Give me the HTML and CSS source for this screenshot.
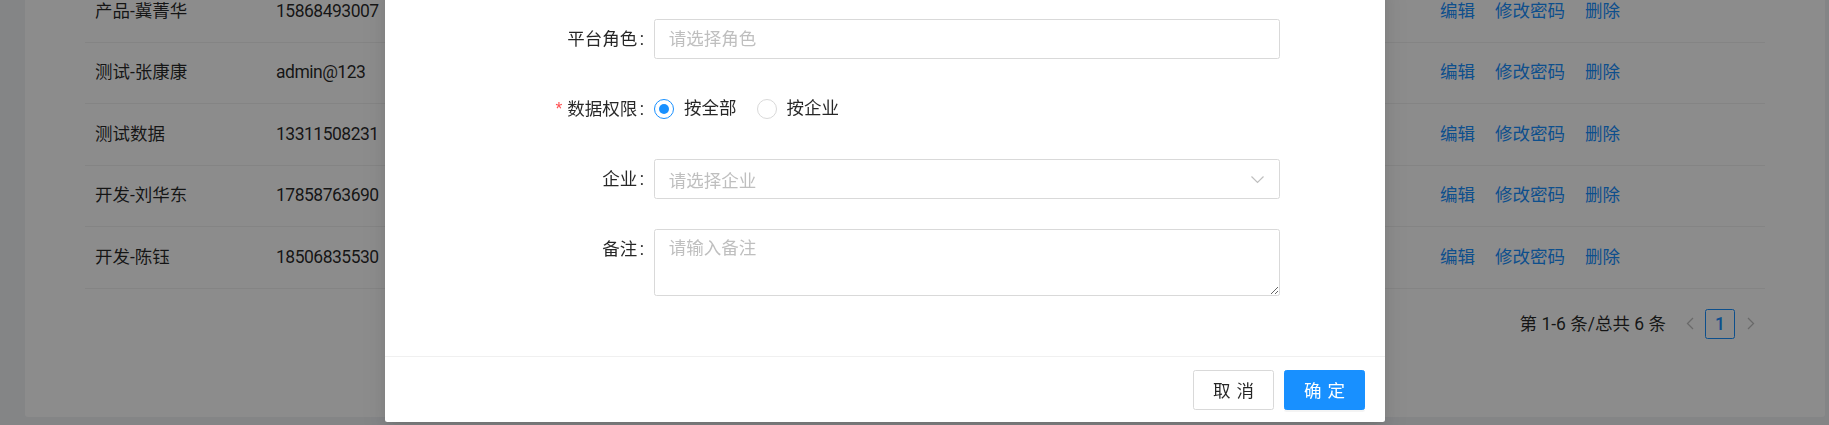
FILE: index.html
```html
<!DOCTYPE html>
<html lang="zh-CN">
<head>
<meta charset="utf-8">
<title>用户管理</title>
<link rel="stylesheet" href="styles.css">
</head>
<body>
<div class="page">
  <div class="card">
    <div class="rows">
      <div class="row">
        <div class="cell c-name">产品-冀菁华</div>
        <div class="cell c-account">15868493007</div>
        <div class="cell c-actions"><a class="link">编辑</a><a class="link">修改密码</a><a class="link">删除</a></div>
      </div>
      <div class="row">
        <div class="cell c-name">测试-张康康</div>
        <div class="cell c-account">admin@123</div>
        <div class="cell c-actions"><a class="link">编辑</a><a class="link">修改密码</a><a class="link">删除</a></div>
      </div>
      <div class="row">
        <div class="cell c-name">测试数据</div>
        <div class="cell c-account">13311508231</div>
        <div class="cell c-actions"><a class="link">编辑</a><a class="link">修改密码</a><a class="link">删除</a></div>
      </div>
      <div class="row">
        <div class="cell c-name">开发-刘华东</div>
        <div class="cell c-account">17858763690</div>
        <div class="cell c-actions"><a class="link">编辑</a><a class="link">修改密码</a><a class="link">删除</a></div>
      </div>
      <div class="row">
        <div class="cell c-name">开发-陈钰</div>
        <div class="cell c-account">18506835530</div>
        <div class="cell c-actions"><a class="link">编辑</a><a class="link">修改密码</a><a class="link">删除</a></div>
      </div>
    </div>
    <div class="pager">
      <span class="pg-total">第 1-6 条/总共 6 条</span>
      <span class="pg-btn pg-disabled"><svg width="15" height="15" viewBox="0 0 15 15"><polyline points="10,2 4.5,7.5 10,13" fill="none" stroke="currentColor" stroke-width="1.3"/></svg></span>
      <span class="pg-btn pg-item">1</span>
      <span class="pg-btn pg-disabled"><svg width="15" height="15" viewBox="0 0 15 15"><polyline points="5,2 10.5,7.5 5,13" fill="none" stroke="currentColor" stroke-width="1.3"/></svg></span>
    </div>
  </div>
</div>

<div class="mask"></div>

<div class="modal">
  <div class="modal-body">
    <div class="form-item">
      <div class="form-label">平台角色</div>
      <div class="form-control">
        <input class="input" type="text" placeholder="请选择角色">
      </div>
    </div>
    <div class="form-item">
      <div class="form-label"><span class="req">*</span>数据权限</div>
      <div class="form-control radio-group">
        <label class="radio"><span class="radio-dot checked"></span><span class="radio-text">按全部</span></label>
        <label class="radio"><span class="radio-dot"></span><span class="radio-text">按企业</span></label>
      </div>
    </div>
    <div class="form-item">
      <div class="form-label">企业</div>
      <div class="form-control">
        <div class="select">
          <span class="select-ph">请选择企业</span>
          <svg class="select-arrow" width="15" height="15" viewBox="0 0 15 15"><polyline points="1.5,4.5 7.5,10.5 13.5,4.5" fill="none" stroke="currentColor" stroke-width="1.2"/></svg>
        </div>
      </div>
    </div>
    <div class="form-item">
      <div class="form-label">备注</div>
      <div class="form-control">
        <textarea class="textarea" placeholder="请输入备注"></textarea>
      </div>
    </div>
  </div>
  <div class="modal-footer">
    <button class="btn"><span>取消</span></button>
    <button class="btn btn-primary"><span>确定</span></button>
  </div>
</div>
</body>
</html>
```

FILE: styles.css
```css
* {
  box-sizing: border-box;
}

html,
body {
  margin: 0;
  height: 100%;
}

body {
  background: #f0f2f5;
  font-family: "Segoe UI", Roboto, "Noto Sans CJK SC", sans-serif;
  font-size: 17.5px;
  color: rgba(0, 0, 0, 0.85);
  overflow: hidden;
}

.page {
  height: 425px;
  display: flex;
  padding: 0 4px 8px 25px;
}

.card {
  flex: 1;
  background: #fff;
  border-radius: 0 0 3px 3px;
  padding: 0 60px;
  overflow: hidden;
  display: flex;
  flex-direction: column;
}

.rows {
  margin-top: -18.4px;
}

.row {
  display: flex;
  align-items: center;
  height: 61.4px;
  border-bottom: 1px solid #f0f0f0;
}

.cell {
  padding: 0 10px;
  white-space: nowrap;
  line-height: 27.5px;
}

.c-name {
  width: 181px;
  flex: none;
}

.c-account {
  flex: 1;
  letter-spacing: -0.5px;
}

.c-actions {
  width: 335px;
  flex: none;
  display: flex;
  gap: 20px;
}

.link {
  color: #1890ff;
  cursor: pointer;
}

.pager {
  display: flex;
  justify-content: flex-end;
  align-items: center;
  margin-top: 20px;
  height: 30px;
}

.pg-total {
  margin-right: 9px;
  line-height: 30px;
  white-space: nowrap;
}

.pg-btn {
  width: 30px;
  height: 30px;
  display: flex;
  align-items: center;
  justify-content: center;
}

.pg-disabled {
  color: rgba(0, 0, 0, 0.25);
}

.pg-item {
  border: 1px solid #1890ff;
  border-radius: 2.5px;
  color: #1890ff;
  font-weight: 500;
  font-family: "Segoe UI", Roboto, sans-serif;
}

.mask {
  position: fixed;
  inset: 0;
  background: rgba(0, 0, 0, 0.45);
}

.modal {
  position: fixed;
  left: 385px;
  top: -20px;
  width: 1000px;
  background: #fff;
  border-radius: 2.5px;
  box-shadow: 0 3px 6px -4px rgba(0, 0, 0, 0.12), 0 6px 16px 0 rgba(0, 0, 0, 0.08), 0 9px 28px 8px rgba(0, 0, 0, 0.05);
  display: flex;
  flex-direction: column;
}

.modal-body {
  padding: 39px 30px 30px;
}

.form-item {
  display: flex;
  margin-bottom: 30px;
}

.form-label {
  width: 239px;
  flex: none;
  text-align: right;
  height: 40px;
  line-height: 40px;
  white-space: nowrap;
}

.form-label::after {
  content: ":";
  margin: 0 10px 0 2.5px;
}

.req {
  color: #ff4d4f;
  margin-right: 5px;
  font-family: "Liberation Sans", sans-serif;
}

.form-control {
  width: 626px;
  flex: none;
}

.input {
  display: block;
  width: 100%;
  height: 40px;
  border: 1px solid #d9d9d9;
  border-radius: 2.5px;
  padding: 0 13.75px;
  font: inherit;
  color: rgba(0, 0, 0, 0.85);
  outline: none;
}

.input::placeholder,
.textarea::placeholder {
  color: #bfbfbf;
}

.radio-group {
  display: flex;
  align-items: center;
  height: 40px;
}

.radio {
  display: inline-flex;
  align-items: center;
  margin-right: 10px;
}

.radio-dot {
  width: 20px;
  height: 20px;
  border: 1px solid #d9d9d9;
  border-radius: 50%;
  display: flex;
  align-items: center;
  justify-content: center;
}

.radio-dot.checked {
  border-color: #1890ff;
}

.radio-dot.checked::after {
  content: "";
  width: 10px;
  height: 10px;
  border-radius: 50%;
  background: #1890ff;
}

.radio-text {
  padding: 0 10px;
  line-height: 27.5px;
}

.select {
  height: 40px;
  border: 1px solid #d9d9d9;
  border-radius: 2.5px;
  padding: 0 14px 0 13.75px;
  display: flex;
  align-items: center;
  justify-content: space-between;
}

.select-ph {
  color: #bfbfbf;
}

.select-arrow {
  color: #bfbfbf;
}

.textarea {
  display: block;
  width: 100%;
  height: 67px;
  border: 1px solid #d9d9d9;
  border-radius: 2.5px;
  padding: 5px 13.75px;
  font: inherit;
  line-height: 27.5px;
  color: rgba(0, 0, 0, 0.85);
  outline: none;
  resize: vertical;
}

.modal-footer {
  border-top: 1px solid #f0f0f0;
  padding: 12.5px 20px;
  display: flex;
  justify-content: flex-end;
  gap: 10px;
}

.btn {
  height: 40px;
  min-width: 81px;
  padding: 0 18.75px;
  border: 1px solid #d9d9d9;
  border-radius: 2.5px;
  background: #fff;
  font: inherit;
  color: rgba(0, 0, 0, 0.85);
  white-space: nowrap;
  cursor: pointer;
}

.btn span {
  letter-spacing: 0.34em;
  margin-right: -0.34em;
}

.btn-primary {
  background: #1890ff;
  border-color: #1890ff;
  color: #fff;
  box-shadow: 0 2px 0 rgba(0, 0, 0, 0.045);
}
```
